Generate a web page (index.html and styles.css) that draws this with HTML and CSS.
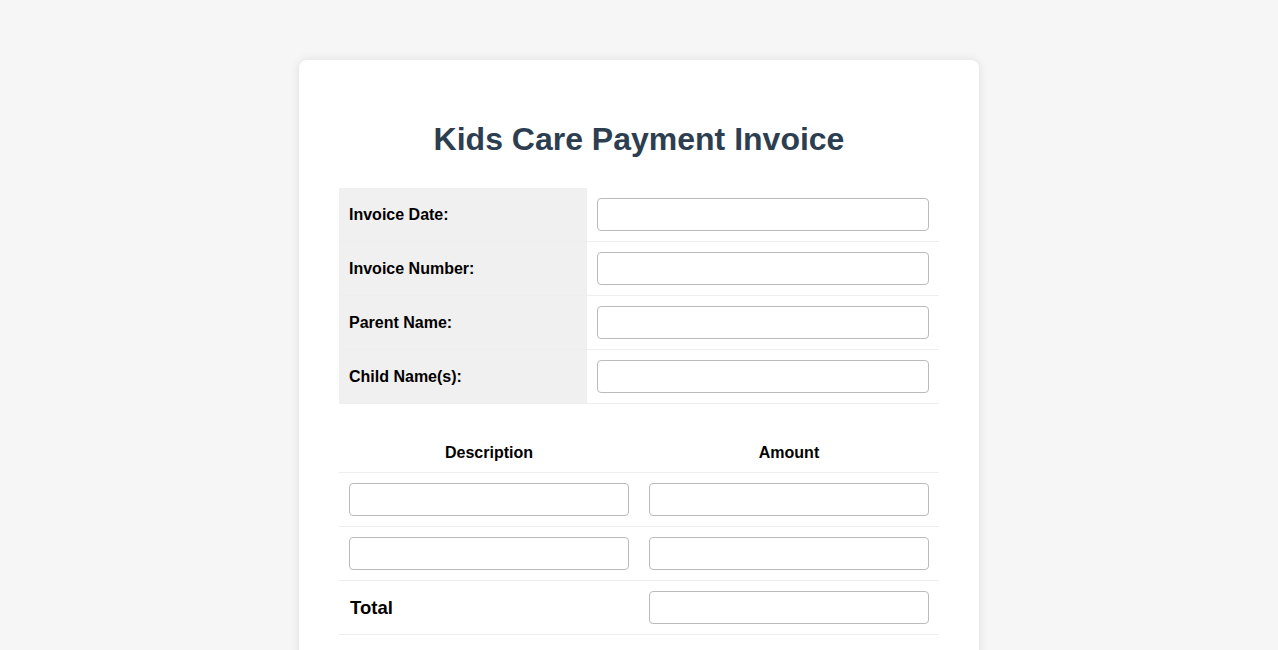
FILE: index.html
```html
<!DOCTYPE html>
<html lang="en">
<head>
<meta charset="UTF-8">
<title>Kids Care Payment Invoice</title>
<link rel="stylesheet" href="styles.css">
</head>
<body>
<div class="invoice">
  <h1 class="title">Kids Care Payment Invoice</h1>
  <table class="info">
    <tr><th>Invoice Date:</th><td><input type="text"></td></tr>
    <tr><th>Invoice Number:</th><td><input type="text"></td></tr>
    <tr><th>Parent Name:</th><td><input type="text"></td></tr>
    <tr><th>Child Name(s):</th><td><input type="text"></td></tr>
  </table>
  <table class="items">
    <thead>
      <tr><th>Description</th><th>Amount</th></tr>
    </thead>
    <tbody>
      <tr><td><input type="text"></td><td><input type="text"></td></tr>
      <tr><td><input type="text"></td><td><input type="text"></td></tr>
      <tr><td class="total">Total</td><td><input type="text"></td></tr>
    </tbody>
  </table>
</div>
</body>
</html>
```
FILE: styles.css
```css
html, body {
  margin: 0;
  padding: 0;
}
body {
  background: #f6f6f6;
  font-family: "Liberation Sans", Arial, sans-serif;
  color: #000;
}
.invoice {
  width: 600px;
  margin: 60px auto 40px;
  padding: 40px;
  background: #fff;
  border-radius: 8px;
  box-shadow: 0 0 10px rgba(0, 0, 0, 0.1);
}
.title {
  margin: 21px 0 30px;
  font-size: 32px;
  font-weight: bold;
  text-align: center;
  color: #2c3e50;
}
table {
  width: 100%;
  border-collapse: collapse;
  table-layout: fixed;
}
th, td {
  padding: 10px;
  border-bottom: 1px solid #eee;
  font-size: 16px;
}
.info {
  margin-bottom: 30px;
}
.info th {
  width: 228px;
  background: #f0f0f0;
  text-align: left;
  font-weight: bold;
}
.items th {
  text-align: center;
  font-weight: bold;
}
.items td.total {
  font-size: 18.5px;
  font-weight: bold;
  padding-left: 11px;
}
input {
  display: block;
  width: 100%;
  box-sizing: border-box;
  padding: 8px;
  border: 1px solid #bbb;
  border-radius: 4px;
  font-family: "Liberation Sans", Arial, sans-serif;
  font-size: 13.333px;
  line-height: 15px;
  background: #fff;
  margin: 0;
}
```
